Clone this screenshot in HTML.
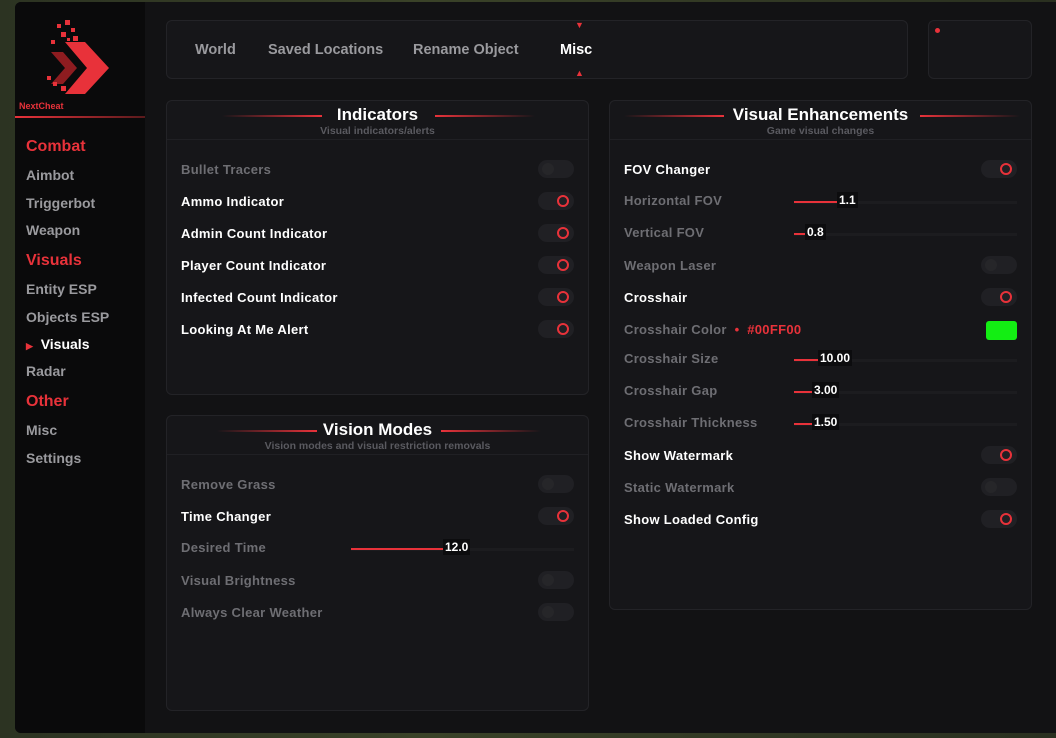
<!DOCTYPE html><html><head><style>
*{margin:0;padding:0;box-sizing:border-box}
body{width:1056px;height:738px;overflow:hidden;background:linear-gradient(90deg,#2c3322,#3a4228 40%,#2a3020);font-family:"Liberation Sans",sans-serif;font-weight:bold;position:relative}
.win{position:absolute;left:15px;top:2px;width:1041px;height:731px;background:#121214;border-radius:6px 0 0 6px;overflow:hidden}
.side{position:absolute;left:0;top:0;width:130px;height:731px;background:#0a0a0b}
.abs{position:absolute}
.nav{font-size:14px;color:#9a9a9e;position:absolute}
.tab{font-size:14.5px;color:#9a9a9e;position:absolute}
.box{position:absolute;background:#161619;border:1px solid #232327;border-radius:6px}
.t{position:absolute;font-size:13px;color:#fff;letter-spacing:.3px;margin-top:-2px}
.d{color:#6e6e73}
.tg{position:absolute;width:36px;height:18px;border-radius:9px;background:#202024;margin-top:-2px}
.tg.on::after{content:"";position:absolute;right:5px;top:3px;width:8px;height:8px;border:2px solid #e8323a;border-radius:50%}
.tg.off::after{content:"";position:absolute;left:4px;top:3px;width:12px;height:12px;border-radius:50%;background:#262629}
.hd{position:absolute;left:0;right:0;text-align:center;color:#fff;font-size:17px}
.sub{position:absolute;left:0;right:0;text-align:center;color:#5a5a60;font-size:10.5px}
.ln{position:absolute;height:2px;background:linear-gradient(90deg,transparent,#e8323a)}
.ln.r{background:linear-gradient(90deg,#e8323a,transparent)}
.sl{position:absolute;height:3px;background:#1c1c1f}
.sl i{position:absolute;left:0;top:0;height:2px;background:#e8323a}
.sl b{position:absolute;top:-9px;font-size:12px;color:#fff;background:#0c0c0e;padding:1px 2px}
.sep{position:absolute;left:0;right:0;top:38px;height:1px;background:#202024}
</style></head><body>
<div class="win">
<div class="side">
<svg class="abs" style="left:24px;top:14px" width="76" height="84" viewBox="0 0 76 84">
<path d="M26 26 L46 26 L70 52 L46 78 L26 78 L48 52 Z" fill="#e8323a"/>
<path d="M12 36 L24 36 L38 52 L24 68 L12 68 L26 52 Z" fill="#8e1c20"/>
<rect x="18" y="8" width="4" height="4" fill="#e8323a"/><rect x="26" y="4" width="5" height="5" fill="#e8323a"/><rect x="32" y="12" width="4" height="4" fill="#e8323a"/><rect x="22" y="16" width="5" height="5" fill="#e8323a"/><rect x="12" y="24" width="4" height="4" fill="#e8323a"/><rect x="34" y="20" width="5" height="5" fill="#e8323a"/><rect x="28" y="22" width="3" height="3" fill="#e8323a"/>
<rect x="14" y="66" width="4" height="4" fill="#e8323a"/><rect x="22" y="70" width="5" height="5" fill="#e8323a"/><rect x="32" y="74" width="4" height="4" fill="#e8323a"/><rect x="8" y="60" width="4" height="4" fill="#e8323a"/><rect x="38" y="70" width="4" height="4" fill="#e8323a"/>
</svg>
<div class="abs" style="left:4px;top:99px;font-size:9px;color:#e8323a">NextCheat</div>
<div class="abs" style="left:0;top:114px;width:130px;height:2px;background:linear-gradient(90deg,#e8323a,#5a1a1c)"></div>
<div class="abs" style="left:11px;top:136px;font-size:16px;color:#e8323a">Combat</div>
<div class="nav" style="left:11px;top:165px">Aimbot</div>
<div class="nav" style="left:11px;top:193px">Triggerbot</div>
<div class="nav" style="left:11px;top:220px">Weapon</div>
<div class="abs" style="left:11px;top:250px;font-size:16px;color:#e8323a">Visuals</div>
<div class="nav" style="left:11px;top:279px">Entity ESP</div>
<div class="nav" style="left:11px;top:307px">Objects ESP</div>
<div class="nav" style="left:11px;top:334px;color:#fff"><span style="color:#e8323a;font-size:9px">▶</span>&nbsp; Visuals</div>
<div class="nav" style="left:11px;top:361px">Radar</div>
<div class="abs" style="left:11px;top:391px;font-size:16px;color:#e8323a">Other</div>
<div class="nav" style="left:11px;top:420px">Misc</div>
<div class="nav" style="left:11px;top:448px">Settings</div>
</div>
<div class="box" style="left:151px;top:18px;width:742px;height:59px">
<div class="tab" style="left:28px;top:21px">World</div>
<div class="tab" style="left:101px;top:21px">Saved Locations</div>
<div class="tab" style="left:246px;top:21px">Rename Object</div>
<div class="tab" style="left:393px;top:21px;color:#fff">Misc</div>
<div class="abs" style="left:408px;top:-1px;color:#e8323a;font-size:9px">▼</div>
<div class="abs" style="left:408px;top:47px;color:#e8323a;font-size:9px">▲</div>
</div>
<div class="box" style="left:913px;top:18px;width:104px;height:59px"><div class="abs" style="left:6px;top:7px;width:5px;height:5px;border-radius:50%;background:#e8323a"></div></div>

<div class="box" style="left:151px;top:98px;width:423px;height:295px">
<div class="ln" style="left:55px;width:100px;top:14px"></div><div class="ln r" style="left:268px;width:100px;top:14px"></div>
<div class="hd" style="top:4px">Indicators</div><div class="sub" style="top:24px">Visual indicators/alerts</div><div class="sep"></div>
<div class="t d" style="left:14px;top:63px">Bullet Tracers</div><div class="tg off" style="left:371px;top:61px"></div>
<div class="t" style="left:14px;top:95px">Ammo Indicator</div><div class="tg on" style="left:371px;top:93px"></div>
<div class="t" style="left:14px;top:127px">Admin Count Indicator</div><div class="tg on" style="left:371px;top:125px"></div>
<div class="t" style="left:14px;top:159px">Player Count Indicator</div><div class="tg on" style="left:371px;top:157px"></div>
<div class="t" style="left:14px;top:191px">Infected Count Indicator</div><div class="tg on" style="left:371px;top:189px"></div>
<div class="t" style="left:14px;top:223px">Looking At Me Alert</div><div class="tg on" style="left:371px;top:221px"></div>
</div>

<div class="box" style="left:151px;top:413px;width:423px;height:296px">
<div class="ln" style="left:50px;width:100px;top:14px"></div><div class="ln r" style="left:274px;width:100px;top:14px"></div>
<div class="hd" style="top:4px">Vision Modes</div><div class="sub" style="top:24px">Vision modes and visual restriction removals</div><div class="sep"></div>
<div class="t d" style="left:14px;top:63px">Remove Grass</div><div class="tg off" style="left:371px;top:61px"></div>
<div class="t" style="left:14px;top:95px">Time Changer</div><div class="tg on" style="left:371px;top:93px"></div>
<div class="t d" style="left:14px;top:126px">Desired Time</div><div class="sl" style="left:184px;top:132px;width:223px"><i style="width:110px"></i><b style="left:92px">12.0</b></div>
<div class="t d" style="left:14px;top:159px">Visual Brightness</div><div class="tg off" style="left:371px;top:157px"></div>
<div class="t d" style="left:14px;top:191px">Always Clear Weather</div><div class="tg off" style="left:371px;top:189px"></div>
</div>

<div class="box" style="left:594px;top:98px;width:423px;height:510px">
<div class="ln" style="left:14px;width:100px;top:14px"></div><div class="ln r" style="left:310px;width:100px;top:14px"></div>
<div class="hd" style="top:4px">Visual Enhancements</div><div class="sub" style="top:24px">Game visual changes</div><div class="sep"></div>
<div class="t" style="left:14px;top:63px">FOV Changer</div><div class="tg on" style="left:371px;top:61px"></div>
<div class="t d" style="left:14px;top:94px">Horizontal FOV</div><div class="sl" style="left:184px;top:100px;width:223px"><i style="width:45px"></i><b style="left:43px">1.1</b></div>
<div class="t d" style="left:14px;top:126px">Vertical FOV</div><div class="sl" style="left:184px;top:132px;width:223px"><i style="width:14px"></i><b style="left:11px">0.8</b></div>
<div class="t d" style="left:14px;top:159px">Weapon Laser</div><div class="tg off" style="left:371px;top:157px"></div>
<div class="t" style="left:14px;top:191px">Crosshair</div><div class="tg on" style="left:371px;top:189px"></div>
<div class="t d" style="left:14px;top:223px">Crosshair Color <span style="color:#e8323a">&nbsp;•&nbsp; #00FF00</span></div><div class="abs" style="left:376px;top:220px;width:31px;height:19px;background:#13ee13;border-radius:3px"></div>
<div class="t d" style="left:14px;top:252px">Crosshair Size</div><div class="sl" style="left:184px;top:258px;width:223px"><i style="width:27px"></i><b style="left:24px">10.00</b></div>
<div class="t d" style="left:14px;top:284px">Crosshair Gap</div><div class="sl" style="left:184px;top:290px;width:223px"><i style="width:20px"></i><b style="left:18px">3.00</b></div>
<div class="t d" style="left:14px;top:316px">Crosshair Thickness</div><div class="sl" style="left:184px;top:322px;width:223px"><i style="width:20px"></i><b style="left:18px">1.50</b></div>
<div class="t" style="left:14px;top:349px">Show Watermark</div><div class="tg on" style="left:371px;top:347px"></div>
<div class="t d" style="left:14px;top:381px">Static Watermark</div><div class="tg off" style="left:371px;top:379px"></div>
<div class="t" style="left:14px;top:413px">Show Loaded Config</div><div class="tg on" style="left:371px;top:411px"></div>
</div>
</div>
</body></html>
